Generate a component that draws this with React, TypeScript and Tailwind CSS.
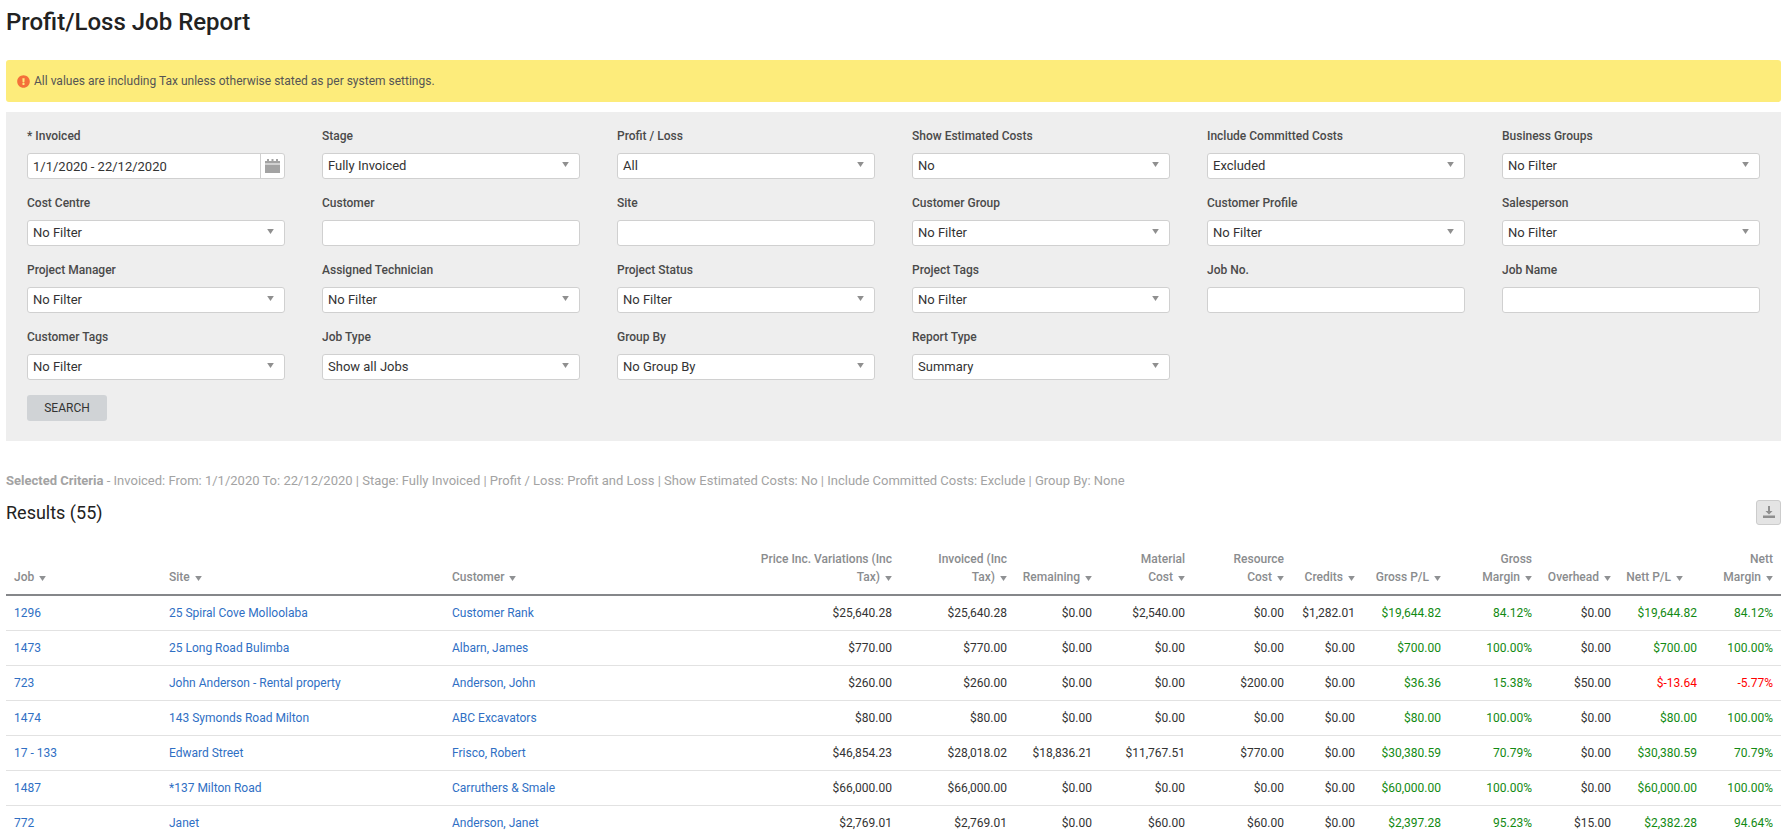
import { FaExclamationCircle } from "react-icons/fa";

type Field = { label: string; value?: string; kind: "select" | "text" | "date" };

const fields: Field[] = [
  { label: "* Invoiced", value: "1/1/2020 - 22/12/2020", kind: "date" },
  { label: "Stage", value: "Fully Invoiced", kind: "select" },
  { label: "Profit / Loss", value: "All", kind: "select" },
  { label: "Show Estimated Costs", value: "No", kind: "select" },
  { label: "Include Committed Costs", value: "Excluded", kind: "select" },
  { label: "Business Groups", value: "No Filter", kind: "select" },
  { label: "Cost Centre", value: "No Filter", kind: "select" },
  { label: "Customer", kind: "text" },
  { label: "Site", kind: "text" },
  { label: "Customer Group", value: "No Filter", kind: "select" },
  { label: "Customer Profile", value: "No Filter", kind: "select" },
  { label: "Salesperson", value: "No Filter", kind: "select" },
  { label: "Project Manager", value: "No Filter", kind: "select" },
  { label: "Assigned Technician", value: "No Filter", kind: "select" },
  { label: "Project Status", value: "No Filter", kind: "select" },
  { label: "Project Tags", value: "No Filter", kind: "select" },
  { label: "Job No.", kind: "text" },
  { label: "Job Name", kind: "text" },
  { label: "Customer Tags", value: "No Filter", kind: "select" },
  { label: "Job Type", value: "Show all Jobs", kind: "select" },
  { label: "Group By", value: "No Group By", kind: "select" },
  { label: "Report Type", value: "Summary", kind: "select" },
];

const columns: { label: string; width: string; align: string }[] = [
  { label: "Job", width: "w-[155px]", align: "pl-[8px] pr-[8px] text-left" },
  { label: "Site", width: "w-[283px]", align: "pl-[8px] pr-[8px] text-left" },
  { label: "Customer", width: "w-[307px]", align: "pl-[8px] pr-[8px] text-left" },
  { label: "Price Inc. Variations (Inc\nTax)", width: "w-[149px]", align: "pr-[8px] text-right" },
  { label: "Invoiced (Inc\nTax)", width: "w-[115px]", align: "pr-[8px] text-right" },
  { label: "Remaining", width: "w-[85px]", align: "pr-[8px] text-right" },
  { label: "Material\nCost", width: "w-[93px]", align: "pr-[8px] text-right" },
  { label: "Resource\nCost", width: "w-[99px]", align: "pr-[8px] text-right" },
  { label: "Credits", width: "w-[71px]", align: "pr-[8px] text-right" },
  { label: "Gross P/L", width: "w-[86px]", align: "pr-[8px] text-right" },
  { label: "Gross\nMargin", width: "w-[91px]", align: "pr-[8px] text-right" },
  { label: "Overhead", width: "w-[79px]", align: "pr-[8px] text-right" },
  { label: "Nett P/L", width: "w-[86px]", align: "pr-[22px] text-right" },
  { label: "Nett\nMargin", width: "w-[76px]", align: "pr-[8px] text-right" },
];

const rows = [
  ["1296", "25 Spiral Cove Molloolaba", "Customer Rank", "$25,640.28", "$25,640.28", "$0.00", "$2,540.00", "$0.00", "$1,282.01", "$19,644.82", "84.12%", "$0.00", "$19,644.82", "84.12%"],
  ["1473", "25 Long Road Bulimba", "Albarn, James", "$770.00", "$770.00", "$0.00", "$0.00", "$0.00", "$0.00", "$700.00", "100.00%", "$0.00", "$700.00", "100.00%"],
  ["723", "John Anderson - Rental property", "Anderson, John", "$260.00", "$260.00", "$0.00", "$0.00", "$200.00", "$0.00", "$36.36", "15.38%", "$50.00", "$-13.64", "-5.77%"],
  ["1474", "143 Symonds Road Milton", "ABC Excavators", "$80.00", "$80.00", "$0.00", "$0.00", "$0.00", "$0.00", "$80.00", "100.00%", "$0.00", "$80.00", "100.00%"],
  ["17 - 133", "Edward Street", "Frisco, Robert", "$46,854.23", "$28,018.02", "$18,836.21", "$11,767.51", "$770.00", "$0.00", "$30,380.59", "70.79%", "$0.00", "$30,380.59", "70.79%"],
  ["1487", "*137 Milton Road", "Carruthers & Smale", "$66,000.00", "$66,000.00", "$0.00", "$0.00", "$0.00", "$0.00", "$60,000.00", "100.00%", "$0.00", "$60,000.00", "100.00%"],
  ["772", "Janet", "Anderson, Janet", "$2,769.01", "$2,769.01", "$0.00", "$60.00", "$60.00", "$0.00", "$2,397.28", "95.23%", "$15.00", "$2,382.28", "94.64%"],
];

function Caret() {
  return (
    <svg viewBox="0 0 8 6" className="inline-block w-[7px] h-[5px] ml-[5px] align-[0px] fill-[#8f9193]">
      <path d="M0 0h8L4 6z" />
    </svg>
  );
}

function CalendarIcon() {
  return (
    <svg viewBox="0 0 15 14" className="w-[15px] h-[14px] fill-[#a3a3a3]">
      <path d="M0 2h2V0h2v2h2.5V0h2v2H11V0h2v2h2v2.5H0z" />
      <path d="M0 5.5h15V14H0z" />
    </svg>
  );
}

function FilterField({ field }: { field: Field }) {
  return (
    <div className="h-[67px]">
      <div className="h-[41px] pt-[16px] text-[12px] leading-[16px] font-medium text-[#4a4a4a]">{field.label}</div>
      {field.kind === "date" ? (
        <div className="flex h-[26px] bg-white border border-[#d0d0d0] rounded-[3px] text-[#333]">
          <div className="flex-1 pl-[5px] leading-[25px] text-[13px]">{field.value}</div>
          <div className="w-[24px] border-l border-[#d0d0d0] flex items-center justify-center">
            <CalendarIcon />
          </div>
        </div>
      ) : (
        <div className="relative h-[26px] bg-white border border-[#d0d0d0] rounded-[3px] pl-[5px] leading-[24px] text-[13px] text-[#333]">
          {field.value}
          {field.kind === "select" && (
            <svg viewBox="0 0 8 6" className="absolute right-[10px] top-[8px] w-[7px] h-[5px] fill-[#8f8f8f]">
              <path d="M0 0h8L4 6z" />
            </svg>
          )}
        </div>
      )}
    </div>
  );
}

function cellColor(col: number, value: string) {
  if (col === 9 || col === 10 || col === 12 || col === 13) {
    return value.includes("-") ? "text-[#ff0000]" : "text-[#128a12]";
  }
  return "text-[#333]";
}

export default function App() {
  return (
    <div className="h-[838px] overflow-hidden bg-white px-[6px] font-['Roboto',sans-serif]">
      <h1 className="h-[60px] pt-[6px] text-[24px] leading-[32px] font-medium text-[#222]">Profit/Loss Job Report</h1>

      <div className="h-[42px] flex items-center gap-[4px] px-[11px] rounded-[3px] bg-[#fdec7b] text-[12px] text-[#555]">
        <FaExclamationCircle className="w-[13px] h-[13px] text-[#f4703a]" />
        All values are including Tax unless otherwise stated as per system settings.
      </div>

      <div className="mt-[10px] h-[329px] bg-[#eee] px-[21px]">
        <div className="grid grid-cols-6 gap-x-[37px]">
          {fields.map((f) => (
            <FilterField key={f.label} field={f} />
          ))}
        </div>
        <button className="mt-[15px] w-[80px] h-[26px] rounded-[3px] bg-[#d0d3d6] text-[12px] text-[#333]">SEARCH</button>
      </div>

      <div className="mt-[32px] text-[13px] leading-[16px] text-[#a3a3a3]">
        <span className="font-bold">Selected Criteria</span> - Invoiced: From: 1/1/2020 To: 22/12/2020 | Stage: Fully Invoiced | Profit / Loss: Profit and Loss | Show Estimated Costs: No | Include Committed Costs: Exclude | Group By: None
      </div>

      <div className="mt-[5px] flex items-center justify-between h-[36px]">
        <div className="text-[18px] text-[#222]">Results (55)</div>
        <button className="w-[25px] h-[25px] flex items-center justify-center rounded-[3px] bg-[#e4e4e4] border border-[#ccc]">
          <svg viewBox="0 0 14 14" className="w-[14px] h-[14px] fill-[#8f8f8f]">
            <path d="M6 1h2v5h2.5L7 9.5 3.5 6H6z" />
            <path d="M1 10.5h12V13H1z" />
          </svg>
        </button>
      </div>

      <table className="mt-[20px] w-full table-fixed border-collapse text-[12px]">
        <colgroup>
          {columns.map((c) => (
            <col key={c.label} className={c.width} />
          ))}
        </colgroup>
        <thead>
          <tr className="border-b-[2px] border-[#85878a]">
            {columns.map((c) => (
              <th
                key={c.label}
                className={`align-bottom pb-[8px] leading-[18px] font-medium whitespace-pre text-[#8a8c8e] ${c.align}`}
              >
                {c.label}
                <Caret />
              </th>
            ))}
          </tr>
        </thead>
        <tbody>
          {rows.map((r) => (
            <tr key={r[0]} className="h-[35px] border-b border-[#e2e2e2]">
              {r.map((v, i) =>
                i < 3 ? (
                  <td key={i} className="px-[8px] text-[#2f6fc4]">{v}</td>
                ) : (
                  <td key={i} className={`px-[8px] text-right ${cellColor(i, v)}`}>{v}</td>
                )
              )}
            </tr>
          ))}
        </tbody>
      </table>
    </div>
  );
}
